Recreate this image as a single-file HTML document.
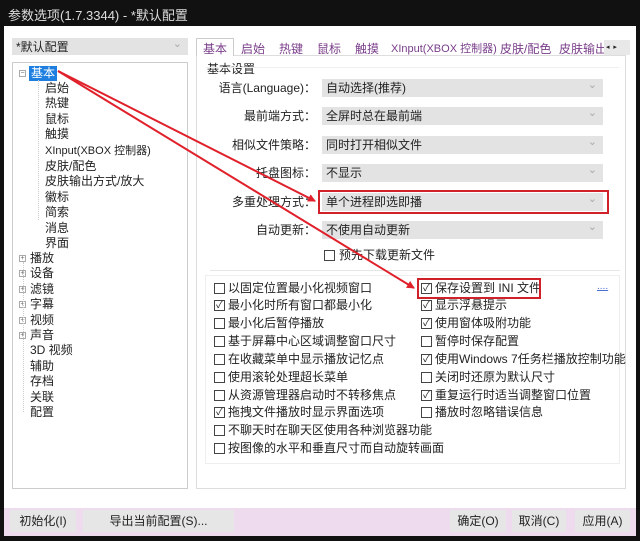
<!DOCTYPE html>
<html><head><meta charset="utf-8"><style>
*{margin:0;padding:0;box-sizing:border-box}
body{width:640px;height:541px;background:#111;position:relative;overflow:hidden;font-family:"Liberation Sans","Noto Sans CJK SC",sans-serif;font-size:12px;color:#222}
.a{position:absolute;white-space:nowrap}
.win{position:absolute;left:4px;top:26px;width:632px;height:510px;background:#fff}
.dd{position:absolute;background:#e3e3e3;height:18px;line-height:18px;padding-left:4px;font-size:12px}
.dd:after{content:"⌄";position:absolute;right:6px;top:-3px;color:#aaa;font-size:11px}
.lbl{position:absolute;text-align:right;width:120px;left:196px;line-height:18px}
.cb{position:absolute;width:11px;height:11px;border:1px solid #444;background:#fff;font-size:10px;line-height:9px;text-align:center}
.ct{position:absolute;line-height:14px;white-space:nowrap}
.tv{position:absolute;line-height:15.4px;font-size:12px}
.pl{position:absolute;width:7px;height:7px;border:1px solid #aaa;font-size:7px;line-height:5px;text-align:center;color:#666;background:#fff}
.btn{position:absolute;top:510px;height:22px;background:#e6e6e6;line-height:22px;text-align:center;font-size:12px}
</style></head><body>
<div class="a" style="left:8px;top:5px;color:#ddd;font-size:13px">参数选项(1.7.3344) - *默认配置</div>
<div class="win"></div>
<div class="dd" style="left:12px;top:38px;width:176px;height:17px">*默认配置</div>
<div class="a" style="left:12px;top:62px;width:176px;height:427px;border:1px solid #ccc"></div>
<div class="a" style="left:196px;top:55px;width:430px;height:434px;border:1px solid #ddd"></div>
<!-- tabs -->
<div class="a" style="left:196px;top:38px;width:38px;height:18px;border:1px solid #ccc;border-bottom:none;background:#fff"></div>
<div class="a" style="left:203px;top:40px;color:#7a3e8a">基本</div>
<div class="a" style="left:241px;top:40px;color:#7a3e8a">启始</div>
<div class="a" style="left:279px;top:40px;color:#7a3e8a">热键</div>
<div class="a" style="left:317px;top:40px;color:#7a3e8a">鼠标</div>
<div class="a" style="left:355px;top:40px;color:#7a3e8a">触摸</div>
<div class="a" style="left:391px;top:40px;color:#7a3e8a;font-size:11px">XInput(XBOX 控制器)</div>
<div class="a" style="left:500px;top:40px;color:#7a3e8a">皮肤/配色</div>
<div class="a" style="left:559px;top:40px;color:#7a3e8a;width:56px;overflow:hidden">皮肤输出</div>
<div class="a" style="left:604px;top:40px;width:26px;height:15px;background:#e8e8e8;font-size:7px;line-height:15px">&nbsp;◂ &nbsp;▸</div>
<div class="a" style="left:207px;top:60px">基本设置</div>
<div class="a" style="left:206px;top:67px;width:413px;height:1px;background:#eee"></div>
<div class="lbl" style="top:79px">语言(Language)：</div>
<div class="lbl" style="top:107px">最前端方式：</div>
<div class="lbl" style="top:136px">相似文件策略：</div>
<div class="lbl" style="top:164px">托盘图标：</div>
<div class="lbl" style="top:193px">多重处理方式：</div>
<div class="lbl" style="top:221px">自动更新：</div>
<div class="dd" style="left:322px;top:79px;width:281px">自动选择(推荐)</div>
<div class="dd" style="left:322px;top:107px;width:281px">全屏时总在最前端</div>
<div class="dd" style="left:322px;top:136px;width:281px">同时打开相似文件</div>
<div class="dd" style="left:322px;top:164px;width:281px">不显示</div>
<div class="dd" style="left:322px;top:193px;width:281px">单个进程即选即播</div>
<div class="dd" style="left:322px;top:221px;width:281px">不使用自动更新</div>
<div class="a" style="left:318px;top:190px;width:291px;height:24px;border:2px solid #d0202a"></div>
<div class="cb" style="left:324px;top:250px"></div><div class="ct" style="left:339px;top:248px">预先下载更新文件</div>
<div class="a" style="left:210px;top:270px;width:410px;height:1px;background:#e6e6e6"></div>
<div class="a" style="left:205px;top:275px;width:415px;height:189px;border:1px solid #eee"></div>
<!-- checkboxes -->
<div class="cb" style="left:214px;top:283px"></div><div class="ct" style="left:228px;top:281px">以固定位置最小化视频窗口</div>
<div class="cb" style="left:214px;top:300px">✓</div><div class="ct" style="left:228px;top:298px">最小化时所有窗口都最小化</div>
<div class="cb" style="left:214px;top:318px"></div><div class="ct" style="left:228px;top:316px">最小化后暂停播放</div>
<div class="cb" style="left:214px;top:336px"></div><div class="ct" style="left:228px;top:334px">基于屏幕中心区域调整窗口尺寸</div>
<div class="cb" style="left:214px;top:354px"></div><div class="ct" style="left:228px;top:352px">在收藏菜单中显示播放记忆点</div>
<div class="cb" style="left:214px;top:372px"></div><div class="ct" style="left:228px;top:370px">使用滚轮处理超长菜单</div>
<div class="cb" style="left:214px;top:390px"></div><div class="ct" style="left:228px;top:388px">从资源管理器启动时不转移焦点</div>
<div class="cb" style="left:214px;top:407px">✓</div><div class="ct" style="left:228px;top:405px">拖拽文件播放时显示界面选项</div>
<div class="cb" style="left:214px;top:425px"></div><div class="ct" style="left:228px;top:423px">不聊天时在聊天区使用各种浏览器功能</div>
<div class="cb" style="left:214px;top:443px"></div><div class="ct" style="left:228px;top:441px">按图像的水平和垂直尺寸而自动旋转画面</div>
<div class="cb" style="left:421px;top:283px">✓</div><div class="ct" style="left:435px;top:281px">保存设置到 INI 文件</div>
<div class="cb" style="left:421px;top:300px">✓</div><div class="ct" style="left:435px;top:298px">显示浮悬提示</div>
<div class="cb" style="left:421px;top:318px">✓</div><div class="ct" style="left:435px;top:316px">使用窗体吸附功能</div>
<div class="cb" style="left:421px;top:336px"></div><div class="ct" style="left:435px;top:334px">暂停时保存配置</div>
<div class="cb" style="left:421px;top:354px">✓</div><div class="ct" style="left:435px;top:352px;width:197px;overflow:hidden">使用Windows 7任务栏播放控制功能</div>
<div class="cb" style="left:421px;top:372px"></div><div class="ct" style="left:435px;top:370px">关闭时还原为默认尺寸</div>
<div class="cb" style="left:421px;top:390px">✓</div><div class="ct" style="left:435px;top:388px">重复运行时适当调整窗口位置</div>
<div class="cb" style="left:421px;top:407px"></div><div class="ct" style="left:435px;top:405px">播放时忽略错误信息</div>
<div class="a" style="left:417px;top:278px;width:124px;height:21px;border:2px solid #d0202a"></div>
<div class="a" style="left:597px;top:281px;color:#4a6fd0;font-size:10px;text-decoration:underline">....</div>
<!-- tree -->
<div class="pl" style="left:19px;top:70px">−</div>
<div class="tv" style="left:29px;top:66px;background:#1e7fe0;color:#fff;padding:0 2px">基本</div>
<div class="a" style="left:38px;top:80px;width:1px;height:140px;border-left:1px dotted #ccc"></div>
<div class="tv" style="left:45px;top:81px">启始<br>热键<br>鼠标<br>触摸<br><span style="font-size:11px">XInput(XBOX 控制器)</span><br>皮肤/配色<br>皮肤输出方式/放大<br>徽标<br>简索<br>消息<br>界面</div>
<div class="pl" style="left:19px;top:255px">+</div><div class="pl" style="left:19px;top:270px">+</div><div class="pl" style="left:19px;top:286px">+</div><div class="pl" style="left:19px;top:301px">+</div><div class="pl" style="left:19px;top:317px">+</div><div class="pl" style="left:19px;top:332px">+</div>
<div class="a" style="left:23px;top:262px;width:1px;height:150px;border-left:1px dotted #ccc"></div>
<div class="tv" style="left:30px;top:251px">播放<br>设备<br>滤镜<br>字幕<br>视频<br>声音<br>3D 视频<br>辅助<br>存档<br>关联<br>配置</div>
<!-- bottom bar -->
<div class="a" style="left:4px;top:508px;width:632px;height:28px;background:#eedcee"></div>
<div class="btn" style="left:10px;width:66px">初始化(I)</div>
<div class="btn" style="left:83px;width:151px">导出当前配置(S)...</div>
<div class="btn" style="left:450px;width:56px">确定(O)</div>
<div class="btn" style="left:512px;width:54px">取消(C)</div>
<div class="btn" style="left:575px;width:55px">应用(A)</div>
<!-- arrows -->
<svg class="a" style="left:0;top:0" width="640" height="541">
<defs><marker id="m" markerWidth="8" markerHeight="8" refX="7" refY="4" orient="auto" markerUnits="userSpaceOnUse"><path d="M0,0 L8,4 L0,8 z" fill="#e0202a"/></marker></defs>
<line x1="58" y1="71" x2="315" y2="201" stroke="#e0202a" stroke-width="2" marker-end="url(#m)"/>
<line x1="58" y1="71" x2="414" y2="288" stroke="#e0202a" stroke-width="2" marker-end="url(#m)"/>
</svg>
</body></html>
